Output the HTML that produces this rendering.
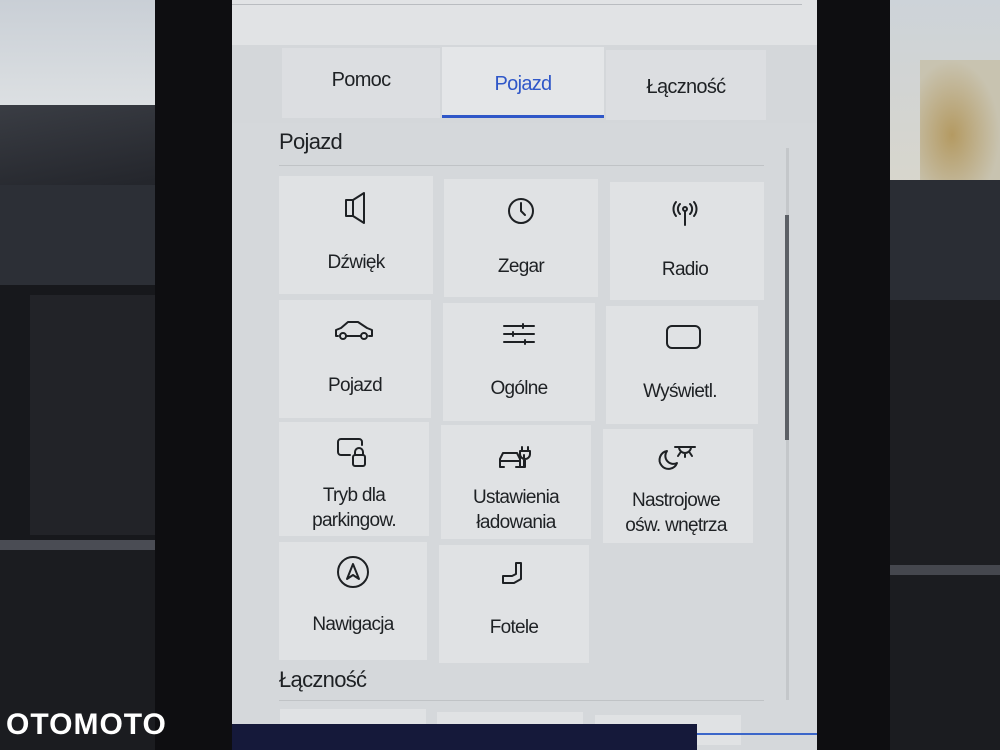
<!DOCTYPE html>
<html><head><meta charset="utf-8"><style>
*{margin:0;padding:0;box-sizing:border-box}
body{width:1000px;height:750px;overflow:hidden;position:relative;background:#1a1b1f;font-family:"Liberation Sans",sans-serif;}
.a{position:absolute}
.t{position:absolute;font-size:19px;color:#1e2124;letter-spacing:-0.7px;text-align:center;line-height:25px}
.tile{position:absolute;background:#e0e2e4;}
svg{position:absolute;overflow:visible}
svg *{fill:none;stroke:#1e2124;stroke-width:2;stroke-linecap:round;stroke-linejoin:round}
</style></head><body>
<div class="a" style="left:0;top:0;width:160px;height:120px;background:linear-gradient(#c9cfd6,#dfe2e4)"></div>
<div class="a" style="left:0;top:105px;width:160px;height:80px;background:linear-gradient(170deg,#3a3d44,#23252b)"></div>
<div class="a" style="left:0;top:185px;width:160px;height:100px;background:#2c2f36"></div>
<div class="a" style="left:0;top:285px;width:160px;height:260px;background:#17181c"></div>
<div class="a" style="left:30px;top:295px;width:125px;height:240px;background:#222328"></div>
<div class="a" style="left:0;top:540px;width:160px;height:10px;background:#4a4c54"></div>
<div class="a" style="left:0;top:550px;width:160px;height:200px;background:#1b1c20"></div>
<div class="a" style="left:885px;top:0;width:115px;height:190px;background:linear-gradient(#cdd3d9,#d8d6cc)"></div>
<div class="a" style="left:920px;top:60px;width:80px;height:125px;background:radial-gradient(ellipse at 40% 60%,#b49a62,#c8c3b0 70%)"></div>
<div class="a" style="left:885px;top:180px;width:115px;height:120px;background:#2a2d34"></div>
<div class="a" style="left:885px;top:300px;width:115px;height:270px;background:#1d1e22"></div>
<div class="a" style="left:885px;top:565px;width:115px;height:10px;background:#45474e"></div>
<div class="a" style="left:885px;top:575px;width:115px;height:175px;background:#1b1c20"></div>
<div class="a" style="left:155px;top:0;width:80px;height:750px;background:#0e0e11"></div>
<div class="a" style="left:815px;top:0;width:75px;height:750px;background:#0e0e11"></div>
<div class="a" style="left:232px;top:0;width:585px;height:750px;background:#d5d8db"></div>
<div class="a" style="left:232px;top:0;width:585px;height:45px;background:#e1e3e5"></div>
<div class="a" style="left:232px;top:4px;width:570px;height:1px;background:#b9bcc0"></div>
<div class="a" style="left:232px;top:45px;width:585px;height:78px;background:#d4d7da"></div>
<div class="tile" style="left:282px;top:48px;width:158px;height:70px;background:#dcdee1"></div>
<div class="tile" style="left:442px;top:47px;width:162px;height:70px;background:#e4e6e8"></div>
<div class="tile" style="left:606px;top:50px;width:160px;height:70px;background:#dcdee1"></div>
<div class="a" style="left:442px;top:115px;width:162px;height:3px;background:#2f57c8"></div>
<div class="t" style="left:282px;top:68px;width:158px;font-size:20px">Pomoc</div>
<div class="t" style="left:442px;top:72px;width:162px;font-size:20px;color:#2f57c8">Pojazd</div>
<div class="t" style="left:606px;top:75px;width:160px;font-size:20px">Łączność</div>
<div class="t" style="left:279px;top:129px;font-size:22px;text-align:left">Pojazd</div>
<div class="a" style="left:279px;top:165px;width:485px;height:1px;background:#c0c3c6"></div>
<div class="a" style="left:786px;top:148px;width:3px;height:552px;background:#c4c7ca"></div>
<div class="a" style="left:785px;top:215px;width:4px;height:225px;background:#5c6066"></div>
<div class="tile" style="left:279px;top:176px;width:154px;height:118px"></div>
<div class="tile" style="left:444px;top:179px;width:154px;height:118px"></div>
<div class="tile" style="left:610px;top:182px;width:154px;height:118px"></div>
<div class="tile" style="left:279px;top:300px;width:152px;height:118px"></div>
<div class="tile" style="left:443px;top:303px;width:152px;height:118px"></div>
<div class="tile" style="left:606px;top:306px;width:152px;height:118px"></div>
<div class="tile" style="left:279px;top:422px;width:150px;height:114px"></div>
<div class="tile" style="left:441px;top:425px;width:150px;height:114px"></div>
<div class="tile" style="left:603px;top:429px;width:150px;height:114px"></div>
<div class="tile" style="left:279px;top:542px;width:148px;height:118px"></div>
<div class="tile" style="left:439px;top:545px;width:150px;height:118px"></div>
<svg style="left:344px;top:191px" width="24" height="34"><path d="M2 9h7l11-7v30L9 25H2z M9 9v16"/></svg>
<svg style="left:507px;top:197px" width="28" height="28"><circle cx="14" cy="14" r="12"/><path d="M14 6v8l4 4"/></svg>
<svg style="left:670px;top:200px" width="30" height="28"><circle cx="15" cy="9" r="2"/><path d="M15 11v14 M10 4a7 7 0 0 0 0 10 M20 4a7 7 0 0 1 0 10 M6 2a11 11 0 0 0 0 14 M24 2a11 11 0 0 1 0 14"/></svg>
<svg style="left:335px;top:320px" width="40" height="22"><path d="M3 16H1v-6l5-2 7-6h10l9 6 5 2v6h-3 M11 16h15"/><circle cx="8" cy="16" r="3"/><circle cx="29" cy="16" r="3"/></svg>
<svg style="left:503px;top:324px" width="32" height="22"><path d="M1 2h30 M1 10h30 M1 18h30 M20 0v4 M10 8v4 M22 16v4"/></svg>
<svg style="left:666px;top:325px" width="36" height="26"><rect x="1" y="1" width="33" height="22" rx="5"/></svg>
<svg style="left:336px;top:437px" width="34" height="32"><path d="M14 18H5a3 3 0 0 1-3-3V5a3 3 0 0 1 3-3h18a3 3 0 0 1 3 3v3"/><rect x="17" y="18" width="12" height="11" rx="2"/><path d="M19 18v-3a4 4 0 0 1 8 0v3"/></svg>
<svg style="left:498px;top:443px" width="38" height="28"><path d="M2 24v-8l3-6h14l3 6v8 M2 18h20 M3 24h3 M18 24h3 M26 24V12 M24 4v4 M30 4v4 M22 8h10v3a5 5 0 0 1-10 0z M27 16v8h-5"/></svg>
<svg style="left:657px;top:445px" width="40" height="26"><path d="M10 6a9 9 0 1 0 10 12A8 8 0 0 1 10 6z M18 2h20 M22 2a6 6 0 0 0 12 0 M28 9v3 M23 8l-2 3 M33 8l2 3"/></svg>
<svg style="left:336px;top:555px" width="34" height="34"><circle cx="17" cy="17" r="15"/><path d="M11 24l6-15 6 15-6-4z"/></svg>
<svg style="left:499px;top:561px" width="30" height="30"><path d="M17 2h5v16l-7 4H4v-7h9l4-2z"/></svg>
<div class="t" style="left:279px;top:250px;width:154px">Dźwięk</div>
<div class="t" style="left:444px;top:254px;width:154px">Zegar</div>
<div class="t" style="left:610px;top:257px;width:150px">Radio</div>
<div class="t" style="left:279px;top:373px;width:152px">Pojazd</div>
<div class="t" style="left:443px;top:376px;width:152px">Ogólne</div>
<div class="t" style="left:604px;top:379px;width:152px">Wyświetl.</div>
<div class="t" style="left:279px;top:483px;width:150px">Tryb dla<br>parkingow.</div>
<div class="t" style="left:441px;top:485px;width:150px">Ustawienia<br>ładowania</div>
<div class="t" style="left:601px;top:488px;width:150px">Nastrojowe<br>ośw. wnętrza</div>
<div class="t" style="left:279px;top:612px;width:148px">Nawigacja</div>
<div class="t" style="left:439px;top:615px;width:150px">Fotele</div>
<div class="t" style="left:279px;top:667px;font-size:22px;text-align:left">Łączność</div>
<div class="a" style="left:279px;top:700px;width:485px;height:1px;background:#c0c3c6"></div>
<div class="tile" style="left:280px;top:709px;width:146px;height:30px"></div>
<div class="tile" style="left:437px;top:712px;width:146px;height:30px"></div>
<div class="tile" style="left:595px;top:715px;width:146px;height:30px"></div>
<div class="a" style="left:232px;top:724px;width:465px;height:26px;background:#15193a"></div>
<div class="a" style="left:697px;top:733px;width:120px;height:2px;background:#3b66c9"></div>
<div class="a" style="left:6px;top:708px;font-size:30px;font-weight:bold;color:#fff;letter-spacing:1px">OTOMOTO</div>
</body></html>
